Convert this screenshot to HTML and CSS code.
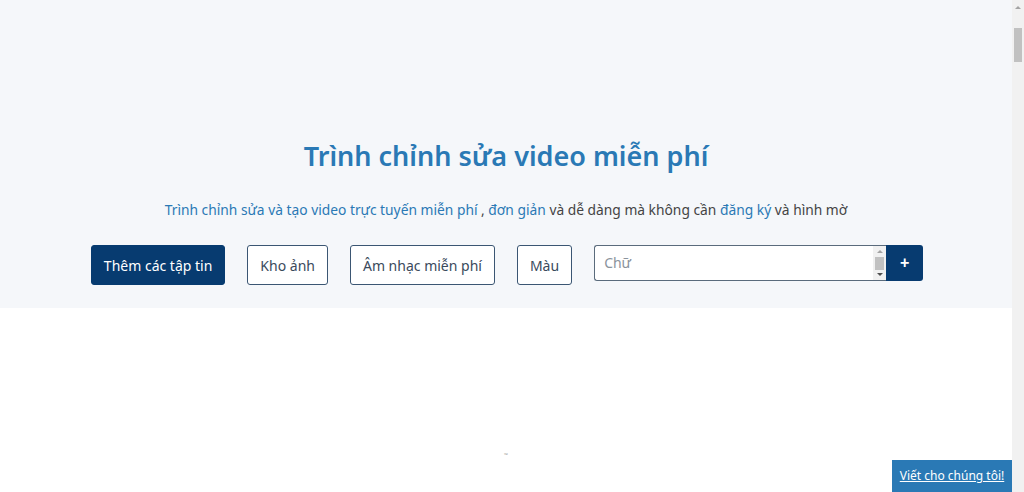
FILE: index.html
```html
<!DOCTYPE html>
<html lang="vi">
<head>
    <meta charset="utf-8">
    <title>Trình chỉnh sửa video miễn phí</title>
    <link rel="stylesheet" href="styles.css">
</head>
<body>
    <section class="hero">
        <h1 class="hero-title">Trình chỉnh sửa video miễn phí</h1>
        <p class="hero-sub">
            <a href="#">Trình chỉnh sửa và tạo video trực tuyến miễn phí</a> , <a href="#">đơn giản</a> và dễ dàng mà không cần <a href="#">đăng ký</a> và hình mờ
        </p>
        <div class="toolbar">
            <button type="button" class="btn btn-primary">Thêm các tập tin</button>
            <button type="button" class="btn btn-outline">Kho ảnh</button>
            <button type="button" class="btn btn-outline">Âm nhạc miễn phí</button>
            <button type="button" class="btn btn-outline">Màu</button>
            <div class="text-group">
                <div class="text-box">
                    <textarea class="text-input" placeholder="Chữ"></textarea>
                    <div class="mini-scroll">
                        <span class="arrow-up"></span>
                        <span class="mini-thumb"></span>
                        <span class="arrow-down"></span>
                    </div>
                </div>
                <button type="button" class="btn-add">+</button>
            </div>
        </div>
    </section>
    <main class="workspace">
        <div class="stage">
            <span class="tiny">™</span>
        </div>
    </main>
    <div class="page-scroll">
        <span class="arrow-up"></span>
        <span class="page-thumb"></span>
    </div>
    <a href="#" class="feedback">Viết cho chúng tôi!</a>
</body>
</html>
```

FILE: styles.css
```css
body{
    margin: 0 12px 0 0;
    font-family: "Noto Sans", "Open Sans", sans-serif;
    color: #444;
    background: #fff;
}
.hero{
    background-color: #f5f7fa;
    height: 308px;
    padding-top: 134px;
    box-sizing: border-box;
    text-align: center;
}
.hero-title{
    margin: 0;
    font-size: 27px;
    font-weight: 600;
    line-height: 44px;
    color: #2a79b5;
}
.hero-sub{
    margin: 21px 0 0;
    font-size: 13.8px;
    line-height: 22px;
    color: #444;
}
.hero-sub a{
    color: #2a79b5;
    text-decoration: none;
}
.toolbar{
    display: flex;
    justify-content: center;
    align-items: flex-start;
    gap: 22px;
    margin-top: 24px;
    padding-left: 2px;
}
.btn{
    height: 40px;
    padding: 0 12px;
    font-family: inherit;
    font-size: 14px;
    border-radius: 3px;
    cursor: pointer;
}
.btn-primary{
    background-color: #073b70;
    border: 1px solid #073b70;
    color: #fff;
}
.btn-outline{
    background-color: #fff;
    border: 1px solid #3b5673;
    color: #3a4a5c;
}
.text-group{
    display: flex;
    height: 36px;
}
.text-box{
    display: flex;
    width: 292px;
    height: 36px;
    box-sizing: border-box;
    border: 1px solid #5a6b7c;
    border-right: none;
    border-radius: 3px 0 0 3px;
    background: #fff;
}
.text-input{
    flex: 1;
    height: 34px;
    box-sizing: border-box;
    margin: 0;
    padding: 8px 9px;
    border: none;
    outline: none;
    font-family: inherit;
    font-size: 14px;
    line-height: 18px;
    resize: none;
    overflow: hidden;
    background: transparent;
}
.text-input::placeholder{
    color: #8a939c;
}
.mini-scroll{
    width: 13px;
    display: flex;
    flex-direction: column;
    align-items: center;
    justify-content: space-between;
    padding: 4px 0;
    box-sizing: border-box;
    background: #f1f1f1;
}
.mini-thumb{
    width: 9px;
    height: 13px;
    background: #c1c1c1;
}
.arrow-up{
    width: 0;
    height: 0;
    border-left: 3px solid transparent;
    border-right: 3px solid transparent;
    border-bottom: 3px solid #a3a3a3;
}
.arrow-down{
    width: 0;
    height: 0;
    border-left: 3px solid transparent;
    border-right: 3px solid transparent;
    border-top: 3px solid #505050;
}
.btn-add{
    width: 37px;
    height: 36px;
    border: none;
    border-radius: 0 3px 3px 0;
    background-color: #073b70;
    color: #fff;
    font-size: 16px;
    font-weight: bold;
    cursor: pointer;
}
.workspace{
    height: 1400px;
}
.stage{
    height: 150px;
    text-align: center;
    padding-top: 132px;
}
.tiny{
    font-size: 5px;
    color: #999;
}
.page-scroll{
    position: fixed;
    top: 0;
    right: 0;
    width: 12px;
    height: 100%;
    background: #f1f1f1;
    display: flex;
    flex-direction: column;
    align-items: center;
    padding-top: 6px;
    box-sizing: border-box;
}
.page-thumb{
    width: 8px;
    height: 34px;
    margin-top: 19px;
    background: #c1c1c1;
}
.feedback{
    position: fixed;
    right: 12px;
    bottom: 0;
    width: 120px;
    height: 32px;
    line-height: 32px;
    text-align: center;
    background-color: #2a79b5;
    color: #fff;
    font-size: 12px;
}
```
